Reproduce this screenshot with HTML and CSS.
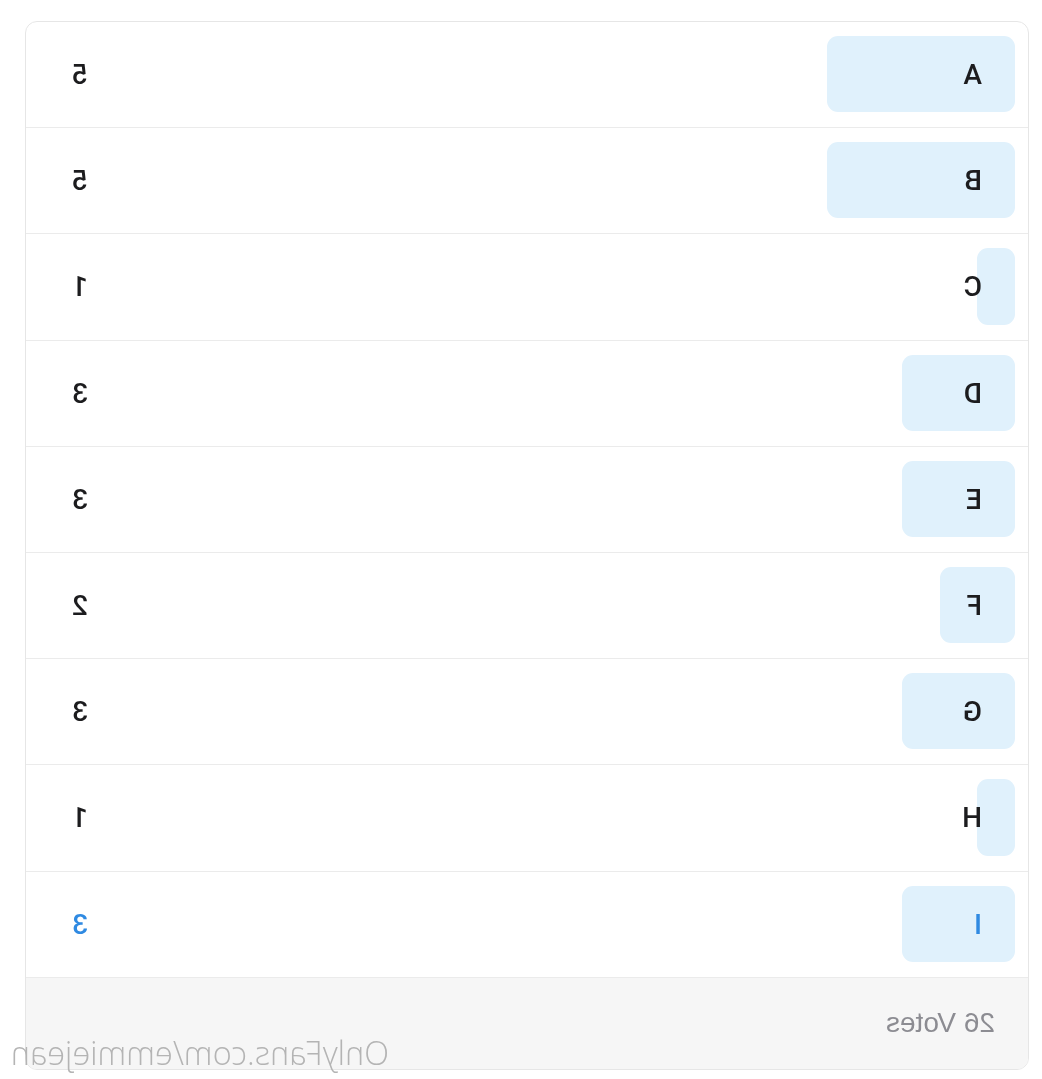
FILE: index.html
```html
<!DOCTYPE html>
<html lang="en">
<head>
    <meta charset="UTF-8">
    <meta name="viewport" content="width=device-width, initial-scale=1.0">
    <title>Poll results</title>
    <link rel="stylesheet" href="styles.css">
</head>
<body>
    <!-- the screenshot is a mirrored capture, so the whole page is flipped -->
    <div class="page">
        <section class="poll">
            <div class="row">
                <div class="track"><div class="fill" style="width: 19.23%"></div></div>
                <span class="label">A</span><span class="count">5</span>
            </div>
            <div class="row">
                <div class="track"><div class="fill" style="width: 19.23%"></div></div>
                <span class="label">B</span><span class="count">5</span>
            </div>
            <div class="row">
                <div class="track"><div class="fill" style="width: 3.85%"></div></div>
                <span class="label">C</span><span class="count">1</span>
            </div>
            <div class="row">
                <div class="track"><div class="fill" style="width: 11.54%"></div></div>
                <span class="label">D</span><span class="count">3</span>
            </div>
            <div class="row">
                <div class="track"><div class="fill" style="width: 11.54%"></div></div>
                <span class="label">E</span><span class="count">3</span>
            </div>
            <div class="row">
                <div class="track"><div class="fill" style="width: 7.69%"></div></div>
                <span class="label">F</span><span class="count">2</span>
            </div>
            <div class="row">
                <div class="track"><div class="fill" style="width: 11.54%"></div></div>
                <span class="label">G</span><span class="count">3</span>
            </div>
            <div class="row">
                <div class="track"><div class="fill" style="width: 3.85%"></div></div>
                <span class="label">H</span><span class="count">1</span>
            </div>
            <div class="row selected">
                <div class="track"><div class="fill" style="width: 11.54%"></div></div>
                <span class="label">I</span><span class="count">3</span>
            </div>
            <footer class="poll-footer">26 Votes</footer>
        </section>
        <span class="watermark">OnlyFans.com/emmiejean</span>
    </div>
</body>
</html>
```

FILE: styles.css
```css
body {
    margin: 0;
    background: #fff;
    font-family: Roboto, 'Liberation Sans', sans-serif;
}
.page {
    position: relative;
    width: 1042px;
    height: 1079px;
    padding: 21px 0 0 13px;
    box-sizing: border-box;
    transform: scaleX(-1);
}
.poll {
    width: 1004px;
    border: 1px solid #e6e6e6;
    border-radius: 12px;
    overflow: hidden;
    box-sizing: border-box;
}
.row {
    position: relative;
    height: 106.2px;
    padding: 0 46px;
    display: flex;
    align-items: center;
    justify-content: space-between;
    border-bottom: 1px solid #ebebeb;
    box-sizing: border-box;
    font-size: 28px;
    font-weight: 500;
    color: #1c1c1e;
}
.track {
    position: absolute;
    top: 14px;
    bottom: 15px;
    left: 13px;
    right: 13px;
}
.fill {
    height: 100%;
    background-color: #e0f1fc;
    border-radius: 11px;
}
.label,
.count {
    position: relative;
}
.selected {
    color: #2f8ae2;
}
.poll-footer {
    height: 91px;
    display: flex;
    align-items: center;
    padding: 0 33px;
    background-color: #f6f6f6;
    color: #8c8c92;
    font-family: 'Liberation Sans', sans-serif;
    font-size: 28px;
}
.watermark {
    position: absolute;
    left: 653px;
    top: 1030px;
    font-family: 'Open Sans', sans-serif;
    font-weight: 300;
    font-size: 32.5px;
    color: #b4b4b4;
    white-space: nowrap;
}
```
